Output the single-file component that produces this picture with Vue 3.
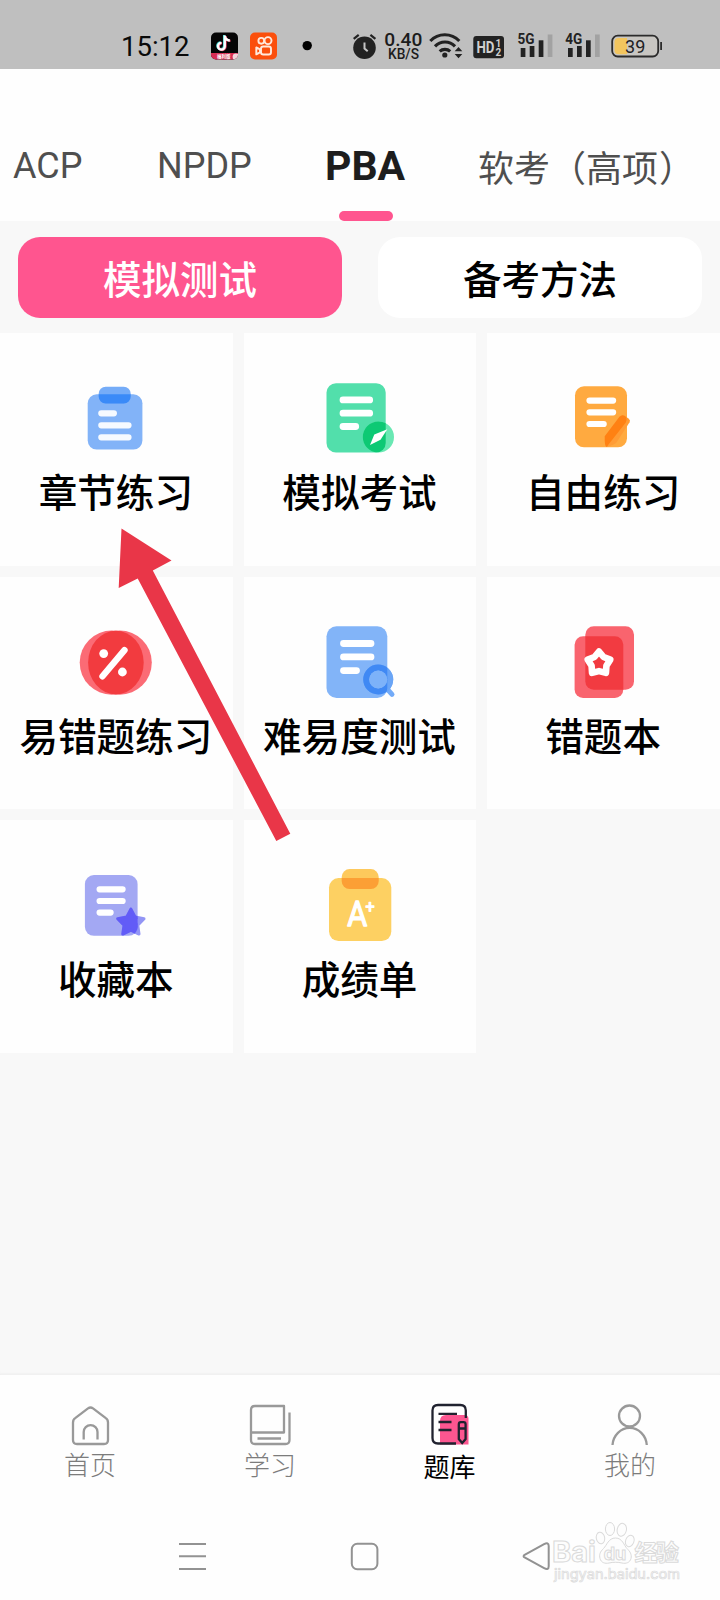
<script setup>
const tabs = [
  { name: 'ACP', cls: 't1' },
  { name: 'NPDP', cls: 't2' },
  { name: 'PBA', cls: 't3 active' },
  { name: '软考（高项', tail: '）', cls: 't4' },
]
const cells = [
  { id: 'chapter', label: '章节练习', box: '71.3 377.7 90 80' },
  { id: 'mock', label: '模拟考试', box: '315 377.7 90 80' },
  { id: 'free', label: '自由练习', box: '558.7 377.7 90 80' },
  { id: 'error', label: '易错题练习', box: '71.3 621.7 90 80' },
  { id: 'level', label: '难易度测试', box: '315 621.7 90 80' },
  { id: 'wrong', label: '错题本', box: '558.7 621.7 90 80' },
  { id: 'fav', label: '收藏本', box: '71.3 864.9 90 80' },
  { id: 'score', label: '成绩单', box: '315 864.9 90 80' },
]
const star = (cx, cy, R, r) =>
  Array.from({ length: 10 }, (_, i) => {
    const a = (-90 + i * 36) * Math.PI / 180
    const k = i % 2 ? r : R
    return `${(cx + k * Math.cos(a)).toFixed(2)},${(cy + k * Math.sin(a)).toFixed(2)}`
  }).join(' ')
</script>

<template>
  <div class="phone">
    <header class="status">
      <span class="time">15:12</span>
      <svg class="status-icons" viewBox="200 0 520 69" width="520" height="69">
        <defs><clipPath id="tk"><rect x="211" y="32.5" width="27" height="27" rx="5" /></clipPath></defs>
        <g clip-path="url(#tk)">
          <rect x="211" y="32" width="27" height="28" fill="#050505" />
          <rect x="211" y="53" width="27" height="7" fill="#d92e55" />
          <circle cx="236" cy="57" r="3.4" fill="#f3d5dc" />
        </g>
        <g fill="none" stroke-width="2.3">
          <path d="M224.8 35.5V46.2a3.4 3.4 0 1 1-3.4-3.4M224.8 36c.4 2.8 2.4 4.3 5 4.5" stroke="#48dcd8" transform="translate(-.7 -.4)" />
          <path d="M224.8 35.5V46.2a3.4 3.4 0 1 1-3.4-3.4M224.8 36c.4 2.8 2.4 4.3 5 4.5" stroke="#ec4467" transform="translate(.7 .4)" />
          <path d="M224.8 35.5V46.2a3.4 3.4 0 1 1-3.4-3.4M224.8 36c.4 2.8 2.4 4.3 5 4.5" stroke="#fff" />
        </g>
        <text x="217" y="58.2" font-size="4.5" fill="#fff" font-weight="700" font-family="Noto Sans CJK SC">福利版</text>

        <rect x="250" y="32.5" width="27" height="27" rx="5" fill="#fb4f0c" />
        <g fill="none" stroke="#ffe9dc" stroke-width="1.9">
          <circle cx="261.3" cy="40.8" r="2.9" /><circle cx="268" cy="40.6" r="3.5" />
          <rect x="261" y="46.5" width="10" height="8" rx="2.3" />
          <path d="M260 49.4l-3.7-2v7l3.7-2z" stroke-linejoin="round" />
        </g>
        <circle cx="307.2" cy="45.6" r="4.7" fill="#000" />

        <circle cx="364.5" cy="47.8" r="11.3" fill="#222" />
        <path d="M353.7 38.8l5-4M375.4 38.8l-5-4" stroke="#222" stroke-width="2.2" />
        <path d="M364.5 42.5v6l3.2 2.8" fill="none" stroke="#c4c4c4" stroke-width="2" />
        <g class="bold" text-anchor="middle" fill="#1c1c1c">
          <text x="403.3" y="45.6" font-size="19" font-weight="500" textLength="38" lengthAdjust="spacingAndGlyphs">0.40</text>
          <text x="403.5" y="59" font-size="13.8" font-weight="500" textLength="31" lengthAdjust="spacingAndGlyphs">KB/S</text>
        </g>
        <g fill="none" stroke="#222" stroke-width="3.1">
          <path d="M430.3 41a20 20 0 0 1 29 0" />
          <path d="M435 46.4a13.5 13.5 0 0 1 20 0" />
          <path d="M439.7 51.4a7.7 7.7 0 0 1 10.5 0" />
        </g>
        <circle cx="444.8" cy="55" r="2.6" fill="#222" />
        <path d="M454.7 51.3l3.8-4.3 3.8 4.3zM454.7 54l3.8 4.3 3.8-4.3z" fill="#222" />
        <rect x="473.3" y="36" width="30.7" height="22.2" rx="3" fill="#222" />
        <text x="476.5" y="52.8" font-size="16" class="bold" font-weight="700" fill="#d0d0d0" textLength="18" lengthAdjust="spacingAndGlyphs">HD</text>
        <text x="495.4" y="46.6" font-size="10" class="bold" font-weight="700" fill="#d0d0d0">1</text>
        <text x="495.4" y="56" font-size="10" class="bold" font-weight="700" fill="#d0d0d0">2</text>
        <text x="517.5" y="44" font-size="15" class="bold" font-weight="700" fill="#222" textLength="17" lengthAdjust="spacingAndGlyphs">5G</text>
        <text x="565.3" y="44" font-size="15" class="bold" font-weight="700" fill="#222" textLength="17" lengthAdjust="spacingAndGlyphs">4G</text>
        <g v-for="x in [520.7, 568]" :key="x" fill="#222">
          <rect :x="x" y="48" width="4.7" height="9" /><rect :x="x + 9" y="46" width="4.7" height="11" />
          <rect :x="x + 18" y="40.3" width="4.7" height="16.7" /><rect :x="x + 27" y="34.5" width="4.7" height="22.5" fill="#a2a2a2" />
        </g>
        <rect x="612.2" y="35.7" width="46" height="20.8" rx="5.5" fill="#c8c6c2" stroke="#2b2b2b" stroke-width="1.8" />
        <path d="M618.5 38H627v16.3h-8.5a4 4 0 0 1-4-4V42a4 4 0 0 1 4-4z" fill="#f2c55e" />
        <rect x="660.2" y="42" width="1.8" height="8" fill="#2b2b2b" />
        <text x="635.2" y="52.6" text-anchor="middle" font-size="18" class="bold" fill="#222">39</text>
      </svg>
    </header>

    <nav class="tabs">
      <div v-for="t in tabs" :key="t.name" class="tab" :class="t.cls">{{ t.name }}<span v-if="t.tail" class="tail">{{ t.tail }}</span></div>
    </nav>

    <main class="content">
      <div class="modes">
        <button class="mode on">模拟测试</button>
        <button class="mode">备考方法</button>
      </div>
      <section class="grid">
        <article v-for="c in cells" :key="c.id" class="cell">
          <svg class="icon" :viewBox="c.box" width="90" height="80">
            <g v-if="c.id === 'chapter'">
              <rect x="88" y="394" width="54.7" height="55.3" rx="9" fill="#82b3f8" />
              <rect x="99" y="386.5" width="32" height="16.7" rx="7" fill="#75acf8" />
              <path d="M99 394h32v2.2a7 7 0 0 1-7 7h-18a7 7 0 0 1-7-7z" fill="#3a8af8" />
              <path d="M101.6 413h12.6M101.6 425h27.2M101.6 437h27.2" class="lines" stroke-width="6.2" opacity=".93" />
            </g>
            <g v-else-if="c.id === 'mock'">
              <clipPath id="c2"><rect x="326.5" y="383" width="59.2" height="69.3" rx="9.5" /></clipPath>
              <rect x="326.5" y="383" width="59.2" height="69.3" rx="9.5" fill="#52dfab" />
              <circle cx="378.4" cy="436.7" r="15.6" fill="#69e8b3" />
              <circle cx="378.4" cy="436.7" r="15.6" fill="#0dc974" clip-path="url(#c2)" />
              <path d="M343 399.6h26.7M343 412.9h26.7M343 426.2h12.7" class="lines" stroke-width="6.8" />
              <path d="M370 444.8l4.3-10.5 13-5.3-6.8 10.5z" fill="#fff" />
            </g>
            <g v-else-if="c.id === 'free'">
              <rect x="574.7" y="386" width="52" height="61" rx="9" fill="#ffaa40" />
              <path d="M604.5 436l14.7-19.500q2.500-2.500 5-1l4.300 3q2 1.500.8 3.500L616 442.500q-1 1.500-9.500 4.300-2-.5-2-10.800z" fill="#ff9c35" />
              <path d="M604.500 436l14.700-19.500q2.500-2.500 5-1l1.800 1.400q.8 3.500-.5 5.200L608 444.500l-1.500 2.300q-2.500-.500-2-10.800z" fill="#ff8113" />
              <path d="M589.2 400.3h23.6M589.2 412h23.6M589.2 423.7h14.2" class="lines" stroke-width="6.2" />
            </g>
            <g v-else-if="c.id === 'error'">
              <circle cx="112.1" cy="662.3" r="32.1" fill="#fb6b75" />
              <circle cx="120" cy="662.3" r="32.1" fill="#fb6b75" />
              <ellipse cx="116.2" cy="662.3" rx="27.8" ry="31.8" fill="#f23b3f" />
              <path d="M102.8 676l22-26.2" class="lines" stroke-width="6.4" />
              <circle cx="104" cy="653.3" r="4.4" fill="#fff" /><circle cx="122.7" cy="671.7" r="4.4" fill="#fff" />
            </g>
            <g v-else-if="c.id === 'level'">
              <clipPath id="c5"><rect x="326.5" y="626" width="60.8" height="71.7" rx="10" /></clipPath>
              <path d="M386 687.5l6 6.6" stroke="#73abf8" stroke-width="5" stroke-linecap="round" />
              <circle cx="378.2" cy="679.2" r="15" fill="#68a3f6" />
              <rect x="326.5" y="626" width="60.8" height="71.7" rx="10" fill="#82b4f8" />
              <circle cx="378.2" cy="679.2" r="12" fill="none" stroke="#6aa5f6" stroke-width="6" />
              <circle cx="378.2" cy="679.2" r="12" fill="none" stroke="#4089f4" stroke-width="6" clip-path="url(#c5)" />
              <circle cx="378.2" cy="679.2" r="9" fill="#7db2f9" />
              <path d="M343.5 643.2h27.5M343.5 656.6h27.5M343.5 670.3h13" class="lines" stroke-width="6.8" />
            </g>
            <g v-else-if="c.id === 'wrong'">
              <rect x="585" y="626" width="48.7" height="63.5" rx="8.5" fill="#f9646e" />
              <rect x="574.3" y="636" width="48.7" height="61.8" rx="8.5" fill="#f9646e" />
              <path d="M585 636h29.5a8.5 8.5 0 0 1 8.5 8.5v45H593.5a8.5 8.5 0 0 1-8.5-8.5z" fill="#f23b41" />
              <polygon :points="star(598.7, 663, 11.8, 7.8)" fill="none" stroke="#fff" stroke-width="6.6" stroke-linejoin="round" />
            </g>
            <g v-else-if="c.id === 'fav'">
              <clipPath id="c7"><rect x="85.2" y="875" width="52.7" height="60.7" rx="9" /></clipPath>
              <rect x="85.2" y="875" width="52.7" height="60.7" rx="9" fill="#a3a8f3" />
              <polygon :points="star(131.2, 922.8, 13.8, 7.2)" fill="#9295f5" stroke="#9295f5" stroke-width="3" stroke-linejoin="round" />
              <polygon :points="star(131.2, 922.8, 13.8, 7.2)" fill="#625cf7" stroke="#625cf7" stroke-width="3" stroke-linejoin="round" clip-path="url(#c7)" />
              <path d="M99.9 889.2h23M99.9 900.9h23M99.9 912.5h11" class="lines" stroke-width="6.2" />
            </g>
            <g v-else>
              <rect x="329" y="878" width="62.3" height="63" rx="9.5" fill="#fdd062" />
              <rect x="341.7" y="869" width="37" height="20" rx="8" fill="#fdc95c" />
              <path d="M341.7 878h37v3a8 8 0 0 1-8 8h-21a8 8 0 0 1-8-8z" fill="#fc9f35" />
              <text x="357.2" y="926" text-anchor="middle" class="grade" font-size="34.5" textLength="20" lengthAdjust="spacingAndGlyphs">A</text>
              <text x="370" y="911.8" text-anchor="middle" class="grade plus" font-size="16">+</text>
            </g>
          </svg>
          <span class="label">{{ c.label }}</span>
        </article>
      </section>
      <svg class="arrow" viewBox="110 520 190 330" width="190" height="330">
        <polygon points="121.5,528.5 171.5,560.5 152.8,570.5 290.3,833.7 276.3,841 137.7,578.5 118.7,588" fill="#e93648" />
      </svg>
    </main>

    <footer class="bottom">
      <div class="item">
        <svg viewBox="66 1400 48 48" width="48" height="48" class="gray">
          <path d="M73 1422.5q0-3 2.5-4.6l12.500-9.500q2.500-1.800 5 0l12.500 9.500q2.500 1.600 2.500 4.600V1440q0 4-4 4H77q-4 0-4-4z" />
          <path d="M83.7 1439.5V1432a6.9 6.9 0 0 1 13.8 0v7.5" />
        </svg>
        <span>首页</span>
      </div>
      <div class="item">
        <svg viewBox="246 1400 48 48" width="48" height="48" class="gray">
          <path d="M251 1432.5V1410q0-4 4-4h29v26.5h-33v7.5q0 4 4 4h30.5q4 0 4-4v-27.5M257.5 1438.5h23.5" />
        </svg>
        <span>学习</span>
      </div>
      <div class="item current">
        <svg viewBox="426 1400 48 48" width="48" height="48" fill="none" stroke="#20222f" stroke-width="2.3">
          <path d="M446 1415h18.500q4 0 4 4v25.500H440V1421q0-6 6-6z" fill="#fc5690" stroke="none" />
          <path d="M465.8 1418v-7.500q0-5.500-5.500-5.500H438q-5.500 0-5.500 5.500v27.500q0 5.500 5.500 5.500h18" />
          <path d="M438.500 1413.800h18.500M438.500 1422h13M438.500 1430h13" />
          <path d="M458.800 1439v-14.500q0-2.300 2-2.300h2.800q2 0 2 2.300V1439l-3.400 4zM458.800 1428.500h6.800" />
        </svg>
        <span>题库</span>
      </div>
      <div class="item">
        <svg viewBox="606 1400 48 48" width="48" height="48" class="gray">
          <circle cx="629.5" cy="1416" r="10.5" /><path d="M612.5 1445a17.2 18.500 0 0 1 34.300 0" />
        </svg>
        <span>我的</span>
      </div>
    </footer>
    <div class="system">
      <svg viewBox="0 1515 720 85" width="720" height="85">
        <g fill="none" stroke="#929292" stroke-width="2">
          <path d="M179 1544h27M179 1556.3h27M179 1569h27" />
          <rect x="351.8" y="1543.8" width="25.6" height="25.4" rx="5.5" />
          <path d="M524.6 1554.8l19.5-10.6q4.6-2.4 4.6 1.8v20.3q0 4.2-4.6 1.8l-19.5-10.6q-2-1.4 0-2.7z" />
        </g>
        <g fill="#fdfdfd" stroke="#dadada" stroke-width="1">
          <g class="wm">
            <text x="552" y="1562" font-size="28.5" textLength="44" lengthAdjust="spacingAndGlyphs">Bai</text>
            <text x="634.5" y="1560.5" font-size="23" textLength="44.5">经验</text>
          </g>
          <path d="M615.5 1538c-7 0-8.5 7-12 10.500s-4.500 6-3.500 10 5 5.500 9 4.500 9-1 13 0 8-.5 9-4.500-1-7-4-10-4.500-10.500-11.500-10.500z" />
          <ellipse cx="600.5" cy="1538" rx="4.2" ry="5.8" transform="rotate(-12 600.5 1538)" />
          <ellipse cx="610" cy="1529" rx="4.6" ry="6.5" />
          <ellipse cx="621.8" cy="1529.8" rx="4.6" ry="6.5" transform="rotate(12 621.8 1529.8)" />
          <ellipse cx="629.8" cy="1541" rx="4.2" ry="5.8" transform="rotate(20 629.8 1541)" />
          <text x="615" y="1560" text-anchor="middle" class="wm" font-size="18">du</text>
          <text x="554" y="1578.5" class="url" stroke-width=".7" font-size="14.5" textLength="126" lengthAdjust="spacingAndGlyphs">jingyan.baidu.com</text>
        </g>
      </svg>
    </div>
  </div>
</template>

<style>
body { background: #fff; }
</style>

<style scoped>
.phone { width: 720px; height: 1600px; overflow: hidden; background: #fefefe; font-family: Roboto, "Noto Sans CJK SC", sans-serif; display: flex; flex-direction: column; }
.status { height: 69px; flex: none; background: #bfbfbf; display: flex; justify-content: space-between; }
.time { margin: 30px 0 0 121px; font-size: 27.5px; line-height: 34px; color: #0a0a0a; white-space: nowrap; width: 79px; flex: none; }
.status-icons { flex: none; }
.bold { font-family: Roboto, sans-serif; }
.tabs { height: 152px; flex: none; display: flex; align-items: flex-start; white-space: nowrap; }
.tab { font-size: 36px; line-height: 42px; padding-top: 76px; color: #4f4f4f; height: 76px; }
.t1 { margin-left: 13px; width: 144px; }
.t2 { width: 168px; }
.t3 { width: 154px; }
.t4 { padding-top: 80px; margin-left: -1px; }
.tail { margin-left: 1px; }
.active { font-size: 41px; font-weight: 700; color: #1d1d1d; position: relative; }
.active::after { content: ""; position: absolute; left: 14px; top: 142px; width: 54px; height: 10px; border-radius: 5px; background: #ff558f; }
.content { height: 1154px; flex: none; background: #f8f8f8; position: relative; box-shadow: inset 0 -3px 3px -2px #ececec; }
.modes { display: flex; gap: 36px; padding: 16px 18px 15px; }
.mode { flex: 1; height: 81px; border: 0; border-radius: 22px; background: #fff; font: 500 38.5px/81px "Noto Sans CJK SC", sans-serif; color: #000; padding: 0; }
.mode.on { background: #ff558f; color: #fff; }
.grid { display: grid; grid-template-columns: repeat(3, 1fr); gap: 11px; grid-auto-rows: 232.67px; }
.cell { background: #fefefe; display: flex; flex-direction: column; align-items: center; padding-top: 45px; box-sizing: border-box; }
.icon { flex: none; overflow: visible; }
.label { font: 500 38.6px/44px "Noto Sans CJK SC", sans-serif; color: #000; margin-top: 10px; margin-right: 1px; white-space: nowrap; }
.lines { stroke: #fff; stroke-linecap: round; fill: none; }
.grade { fill: #fff; stroke: #fff; stroke-width: 1.3px; stroke-linejoin: round; font-family: Roboto, sans-serif; font-weight: 400; }
.plus { stroke-width: 1.2px; }
.arrow { position: absolute; left: 110px; top: 299px; }
.bottom { height: 140px; flex: none; display: grid; grid-template-columns: repeat(4, 1fr); background: #fefefe; }
.item { display: flex; flex-direction: column; align-items: center; padding-top: 25px; font: 26px/32px "Noto Sans CJK SC", sans-serif; font-weight: 300; color: #7c7c7c; }
.item.current { color: #000; font-weight: 400; }
.item.current span { margin-top: 2px; margin-right: 1px; }
.gray { fill: none; stroke: #999; stroke-width: 2.3px; stroke-linejoin: round; stroke-linecap: butt; }
.system { height: 85px; flex: none; }
.wm { font-family: Inter, "Noto Sans CJK SC", sans-serif; font-weight: 700; }
.url { font-family: Inter, sans-serif; }
</style>
